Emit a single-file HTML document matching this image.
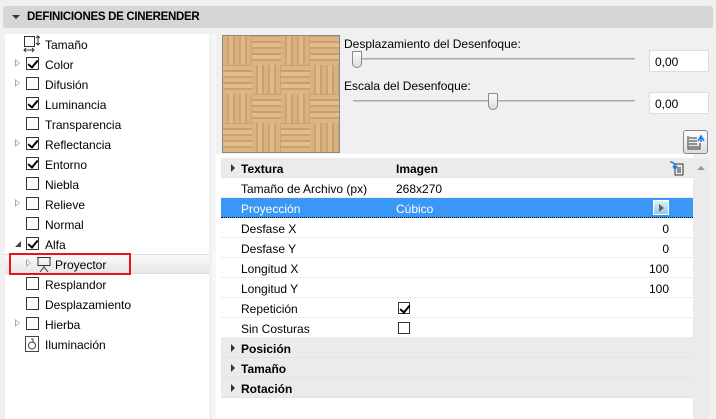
<!DOCTYPE html>
<html><head><meta charset="utf-8"><style>
*{margin:0;padding:0;box-sizing:border-box}
body{width:716px;height:419px;background:#f0f0f0;font-family:"Liberation Sans",sans-serif;font-size:12px;color:#000;position:relative;overflow:hidden}
.a{position:absolute}
.hdr{left:3px;top:6px;width:710px;height:22px;background:#d6d6d6;border-radius:3px}
.hdr span{position:absolute;left:24px;top:5px;font-weight:bold;font-size:11.5px;letter-spacing:-0.3px}
.left{left:5px;top:34px;width:204px;height:385px;background:#fff}
.row{position:absolute;left:0;width:204px;height:20px}
.row .t{position:absolute;left:40px;top:4px}
.cb{position:absolute;left:21px;top:3px;width:13px;height:13px;border:1px solid #333;background:#fff}
.cb.c::after{content:"";position:absolute;left:3px;top:0px;width:4px;height:8px;border:solid #000;border-width:0 2px 2px 0;transform:rotate(40deg)}
.exp{position:absolute;left:10px;top:5px;width:0;height:0;border-left:5px solid #aaa;border-top:4px solid transparent;border-bottom:4px solid transparent}
.exp::after{content:"";position:absolute;left:-4px;top:-2px;border-left:3px solid #fff;border-top:2px solid transparent;border-bottom:2px solid transparent}
.right{left:216px;top:154px;width:477px;height:265px;background:#fff}
.tr{position:absolute;left:221px;width:472px;height:20px;border-bottom:1px solid #eee;background:#fff}
.tr .k{position:absolute;left:20px;top:4px}
.tr .v{position:absolute;left:175px;top:4px}
.tr .n{position:absolute;right:24px;top:4px}
.tr.g{background:#ebebeb;border-bottom:1px solid #e3e3e3}
.tr.g .k,.tr.g .v{font-weight:bold}
.tri{position:absolute;left:10px;top:6px;border-left:4px solid #333;border-top:4px solid transparent;border-bottom:4px solid transparent}
.sel{background:#3a97f5;color:#fff;border-bottom:1px dotted #000}
.tex{left:222px;top:35px;width:118px;height:118px;border:1px solid #888;display:grid;grid-template-columns:repeat(4,1fr);grid-template-rows:repeat(4,1fr);overflow:hidden;background:#d4a877}
.v1{background:repeating-linear-gradient(90deg,#d9b080 0 4px,#cfa271 4px 6px,#e0b889 6px 10px,#caa070 10px 12px)}
.h1{background:repeating-linear-gradient(0deg,#dcb585 0 4px,#cda070 4px 6px,#e3bc8c 6px 10px,#c99d6d 10px 12px)}
.lbl{font-size:12px}
.track{height:2px;background:#ccc;border-top:1px solid #aaa}
.thumb{width:10px;height:17px;background:linear-gradient(#fafafa,#ddd);border:1px solid #888;border-radius:1px 1px 5px 5px}
.inp{width:60px;height:22px;background:#fff;border:1px solid #ddd;padding:4px 5px}
</style></head><body>
<div class="a hdr"><div class="a" style="left:9px;top:9px;border-top:4px solid #333;border-left:4px solid transparent;border-right:4px solid transparent"></div><span>DEFINICIONES DE CINERENDER</span></div>

<div class="a left">
<div class="row" style="top:0"><svg class="a" style="left:18px;top:1px" width="18" height="18"><rect x="1.5" y="1.5" width="10" height="10" fill="none" stroke="#333"/><path d="M15 1v9M13 3l2-2 2 2M13 8l2 2 2-2M1 15h10M3 13l-2 2 2 2M9 13l2 2-2 2" stroke="#333" fill="none"/></svg><span class="t">Tamaño</span></div>
<div class="row" style="top:20px"><i class="exp"></i><i class="cb c"></i><span class="t">Color</span></div>
<div class="row" style="top:40px"><i class="exp"></i><i class="cb"></i><span class="t">Difusión</span></div>
<div class="row" style="top:60px"><i class="cb c"></i><span class="t">Luminancia</span></div>
<div class="row" style="top:80px"><i class="cb"></i><span class="t">Transparencia</span></div>
<div class="row" style="top:100px"><i class="exp"></i><i class="cb c"></i><span class="t">Reflectancia</span></div>
<div class="row" style="top:120px"><i class="cb c"></i><span class="t">Entorno</span></div>
<div class="row" style="top:140px"><i class="cb"></i><span class="t">Niebla</span></div>
<div class="row" style="top:160px"><i class="exp"></i><i class="cb"></i><span class="t">Relieve</span></div>
<div class="row" style="top:180px"><i class="cb"></i><span class="t">Normal</span></div>
<div class="row" style="top:200px"><i class="a" style="left:10px;top:7px;border-bottom:6px solid #444;border-left:6px solid transparent"></i><i class="cb c"></i><span class="t">Alfa</span></div>
<div class="row" style="top:220px;background:linear-gradient(#fafafa,#e6e6e6);border-top:1px solid #ddd;border-bottom:1px solid #ddd"><i class="exp" style="left:21px;top:4px"></i><svg class="a" style="left:31px;top:0px" width="16" height="18"><rect x="2" y="2.5" width="12" height="8" fill="none" stroke="#333"/><path d="M1 2.5h14M8 10.5v2M8 12l-4 5M8 12l4 5" stroke="#333" fill="none"/></svg><span class="t" style="left:50px;top:3px">Proyector</span></div>
<div class="a" style="left:4px;top:219px;width:122px;height:22px;border:2px solid #e8141b"></div>
<div class="row" style="top:240px"><i class="cb"></i><span class="t">Resplandor</span></div>
<div class="row" style="top:260px"><i class="cb"></i><span class="t">Desplazamiento</span></div>
<div class="row" style="top:280px"><i class="exp"></i><i class="cb"></i><span class="t">Hierba</span></div>
<div class="row" style="top:300px"><svg class="a" style="left:20px;top:2px" width="14" height="16"><rect x="0.5" y="0.5" width="13" height="15" fill="none" stroke="#444"/><circle cx="7" cy="9.5" r="3.5" fill="none" stroke="#444"/><path d="M6 3h2v3" stroke="#444" fill="none"/></svg><span class="t">Iluminación</span></div>
</div>

<div class="a" style="left:212px;top:34px;width:4px;height:385px;background:#f7f7f7"></div>

<div class="a tex">
<div class="v1"></div><div class="h1"></div><div class="v1"></div><div class="h1"></div>
<div class="h1"></div><div class="v1"></div><div class="h1"></div><div class="v1"></div>
<div class="v1"></div><div class="h1"></div><div class="v1"></div><div class="h1"></div>
<div class="h1"></div><div class="v1"></div><div class="h1"></div><div class="v1"></div>
</div>

<div class="a lbl" style="left:344px;top:37px">Desplazamiento del Desenfoque:</div>
<div class="a track" style="left:353px;top:58px;width:282px"></div>
<div class="a thumb" style="left:352px;top:51px"></div>
<div class="a inp" style="left:649px;top:50px">0,00</div>
<div class="a lbl" style="left:344px;top:79px">Escala del Desenfoque:</div>
<div class="a track" style="left:353px;top:100px;width:282px"></div>
<div class="a thumb" style="left:488px;top:93px"></div>
<div class="a inp" style="left:649px;top:92px">0,00</div>
<div class="a" style="left:683px;top:130px;width:25px;height:24px;border:1px solid #888;border-radius:3px;background:linear-gradient(#fff,#ddd)"><svg width="23" height="22"><path d="M5 7h8M5 10h8M5 13h8M5 16h10M4 5v13h12v-6" stroke="#333" fill="none"/><path d="M14 10l3-5 3 5M17 5v6" stroke="#1a7fe0" stroke-width="1.6" fill="none"/></svg></div>

<div class="a right"></div>
<div class="a" style="left:693px;top:158px;width:16px;height:261px;background:#ebebeb"><div class="a" style="left:4px;top:8px;border-bottom:4px solid #999;border-left:4px solid transparent;border-right:4px solid transparent"></div></div>

<div class="tr g a" style="top:158px"><i class="tri"></i><span class="k">Textura</span><span class="v">Imagen</span>
<svg class="a" style="left:448px;top:3px" width="16" height="15"><path d="M6 3h8v11H6zM8 7h4M8 9h4M8 11h4" stroke="#333" fill="none"/><path d="M1 1c4 0 5 2 5 6M4 5l2 3 2-3" stroke="#1a7fe0" stroke-width="1.6" fill="none"/></svg></div>
<div class="tr a" style="top:178px"><span class="k">Tamaño de Archivo (px)</span><span class="v">268x270</span></div>
<div class="tr a sel" style="top:198px"><span class="k">Proyección</span><span class="v">Cúbico</span><div class="a" style="left:432px;top:2px;width:16px;height:15px;background:linear-gradient(#e0f0fa,#9cc8e4);border:1px solid #fff"><i class="a" style="left:5px;top:3px;border-left:5px solid #666;border-top:4px solid transparent;border-bottom:4px solid transparent"></i></div></div>
<div class="tr a" style="top:218px"><span class="k">Desfase X</span><span class="n">0</span></div>
<div class="tr a" style="top:238px"><span class="k">Desfase Y</span><span class="n">0</span></div>
<div class="tr a" style="top:258px"><span class="k">Longitud X</span><span class="n">100</span></div>
<div class="tr a" style="top:278px"><span class="k">Longitud Y</span><span class="n">100</span></div>
<div class="tr a" style="top:298px"><span class="k">Repetición</span><i class="cb c" style="left:177px;top:4px;width:12px;height:12px"></i></div>
<div class="tr a" style="top:318px"><span class="k">Sin Costuras</span><i class="cb" style="left:177px;top:4px;width:12px;height:12px"></i></div>
<div class="tr g a" style="top:338px"><i class="tri"></i><span class="k">Posición</span></div>
<div class="tr g a" style="top:358px"><i class="tri"></i><span class="k">Tamaño</span></div>
<div class="tr g a" style="top:378px"><i class="tri"></i><span class="k">Rotación</span></div>
</body></html>
